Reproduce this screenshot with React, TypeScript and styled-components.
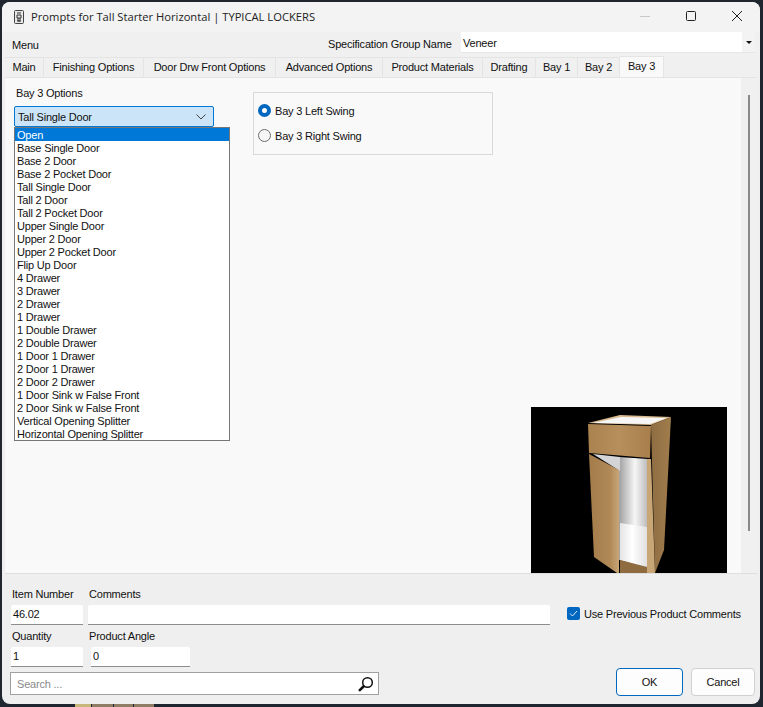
import React from "react";
import styled, { createGlobalStyle } from "styled-components";

const Global = createGlobalStyle`
  html, body { margin: 0; padding: 0; background: #1f2630; }
  body { font-family: "Liberation Sans", Arial, sans-serif; font-size: 11px; letter-spacing: -0.2px; color: #111; }
  #root { height: 707px; width: 763px; overflow: hidden; }
`;

const Desktop = styled.div`
  width: 763px; height: 707px; display: flex; flex-direction: column;
  padding: 2px 3px 0 2px; box-sizing: border-box; background: #1f2630;
`;
const Win = styled.div`
  height: 702px; flex: none; display: flex; flex-direction: column; background: #efefef;
  border-radius: 8px; overflow: hidden;
`;
const TitleBar = styled.div`
  height: 30px; flex: none; display: flex; align-items: center; background: #f3f3f3; padding-left: 12px;
`;
const TitleText = styled.div`
  margin-left: 7px; margin-bottom: 1px; font-family: "Open Sans", sans-serif; font-size: 11.2px; letter-spacing: 0; color: #222; flex: 1; white-space: nowrap;
`;
const WinButtons = styled.div`display: flex; align-items: center; color: #222;`;
const WinButton = styled.div`
  width: 46px; height: 30px; box-sizing: border-box; padding-bottom: 2px; display: flex; align-items: center; justify-content: center;
`;
const MenuRow = styled.div`
  height: 24px; flex: none; display: flex; align-items: center; background: #f0f0f0; padding: 0 5px 0 10px;
`;
const MenuLabel = styled.div`flex: none; width: 316px; padding-top: 2px;`;
const SpecLabel = styled.div`flex: none; width: 133px; white-space: nowrap;`;
const SpecCombo = styled.div`
  flex: 1; height: 21px; margin-top: -3px; background: #fff; display: flex; align-items: flex-start; justify-content: space-between;
  padding-left: 2px; line-height: 22px; border-bottom: 1px solid #e6e6e6; box-sizing: border-box;
`;
const SpecArrow = styled.div`
  width: 13px; height: 20px; background: #f3f3f3; display: flex; align-items: center; justify-content: center;
  &::before { content: ""; border: 3px solid transparent; border-top: 3px solid #111; border-bottom: 0; }
`;
const TabRow = styled.div`
  height: 21px; flex: none; display: flex; align-items: flex-end; padding-left: 3px; background: #f0f0f0;
`;
const Tab = styled.div<{ $w: number; $active?: boolean }>`
  width: ${(p) => p.$w}px; height: ${(p) => (p.$active ? 21 : 20)}px; box-sizing: border-box; flex: none;
  display: flex; align-items: center; justify-content: center; white-space: nowrap;
  background: ${(p) => (p.$active ? "#f9f9f9" : "#f0f0f0")};
  border: 1px solid #e4e4e4; border-bottom: 0; border-left: 0;
  padding-bottom: ${(p) => (p.$active ? 3 : 1)}px;
`;
const Panel = styled.div`
  height: 497px; flex: none; display: flex; margin: 0 3px 0 3px; background: #f9f9f9;
  border-top: 1px solid #e4e4e4; border-bottom: 1px solid #dedede; box-sizing: border-box;
`;
const Content = styled.div`
  flex: 1; display: flex; flex-direction: column; justify-content: space-between; padding-left: 9px; min-width: 0;
`;
const TopArea = styled.div`display: flex; padding-top: 8px; gap: 39px;`;
const OptionColumn = styled.div`position: relative; width: 200px; flex: none;`;
const OptionLabel = styled.div`margin-left: 2px; height: 20px; line-height: 15px;`;
const SelectBox = styled.div`
  height: 21px; box-sizing: border-box; background: #cce4f7; border: 1px solid #0078d4; border-radius: 2px;
  display: flex; align-items: center; justify-content: space-between; padding: 0 7px 0 3px;
`;
const DropList = styled.div`
  position: absolute; left: 0; top: 41px; width: 216px; box-sizing: border-box; background: #fff;
  border: 1px solid #767676; z-index: 2;
`;
const DropItem = styled.div<{ $sel?: boolean }>`
  height: 13px; line-height: 15px; padding-left: 2px; white-space: nowrap;
  background: ${(p) => (p.$sel ? "#0078d7" : "#fff")}; color: ${(p) => (p.$sel ? "#fff" : "#111")};
`;
const SwingBox = styled.div`
  width: 240px; height: 63px; margin-top: 6px; box-sizing: border-box; border: 1px solid #d9d9d9; flex: none;
  display: flex; flex-direction: column; padding: 11px 0 0 4px; gap: 12px;
`;
const RadioRow = styled.div`display: flex; align-items: center; gap: 4px; height: 13px;`;
const Radio = styled.div<{ $on?: boolean }>`
  width: 13px; height: 13px; box-sizing: border-box; border-radius: 50%;
  background: ${(p) => (p.$on ? "#fff" : "#f6f6f6")};
  border: ${(p) => (p.$on ? "4px solid #0067c0" : "1px solid #6c6c6c")};
`;
const PreviewRow = styled.div`display: flex; justify-content: flex-end; padding-right: 14px;`;
const Preview = styled.svg`display: block; width: 196px; height: 166px;`;
const ScrollTrack = styled.div`
  width: 16px; flex: none; background: #f0f0f0; padding-top: 17px; display: flex; justify-content: center; box-sizing: border-box;
`;
const ScrollThumb = styled.div`width: 2px; height: 436px; background: #8a8a8a; margin-right: 1px;`;
const Bottom = styled.div`
  flex: 1; display: flex; flex-direction: column; padding: 13px 5px 0 9px; position: relative; min-height: 0;
`;
const FieldRow = styled.div<{ $mt?: number }>`display: flex; align-items: flex-start; margin-top: ${(p) => p.$mt ?? 0}px;`;
const FieldStack = styled.div<{ $w: number; $ml?: number }>`
  width: ${(p) => p.$w}px; margin-left: ${(p) => p.$ml ?? 0}px; flex: none; display: flex; flex-direction: column;
`;
const FieldLabel = styled.div<{ $ml?: number }>`
  height: 18px; line-height: 14px; margin-left: ${(p) => p.$ml ?? 1}px; white-space: nowrap;
`;
const Input = styled.div`
  height: 19px; line-height: 19px; background: #fff; border-bottom: 1px solid #8d8d8d; box-sizing: content-box;
  padding-left: 2px; border-radius: 2px 2px 0 0;
`;
const CheckWrap = styled.div`
  margin-left: 17px; margin-top: 20px; display: flex; align-items: center; gap: 4px; white-space: nowrap;
`;
const Check = styled.div`
  width: 13px; height: 13px; border-radius: 2px; background: #0067c0; display: flex; align-items: center; justify-content: center;
`;
const SearchBar = styled.div`
  width: 369px; height: 23px; box-sizing: border-box; margin-top: 5px; margin-left: -1px; background: #fff; border: 1px solid #a0a0a0;
  display: flex; align-items: center; justify-content: space-between; padding: 0 4px 0 6px; color: #8a8a8a;
`;
const Buttons = styled.div`
  position: absolute; right: 5px; bottom: 8px; display: flex; gap: 8px;
`;
const DlgButton = styled.div<{ $w: number; $primary?: boolean }>`
  width: ${(p) => p.$w}px; height: 28px; box-sizing: border-box; background: #fdfdfd; border-radius: 4px;
  border: ${(p) => (p.$primary ? "1px solid #0067c0" : "1px solid #d0d0d0")};
  display: flex; align-items: center; justify-content: center;
`;
const Strips = styled.div`display: flex; height: 3px; margin-left: 73px; gap: 1px;`;
const Strip = styled.div<{ $w: number; $c: string }>`width: ${(p) => p.$w}px; background: ${(p) => p.$c};`;

const tabs: [string, number][] = [
  ["Main", 39], ["Finishing Options", 100], ["Door Drw Front Options", 132], ["Advanced Options", 107],
  ["Product Materials", 100], ["Drafting", 53], ["Bay 1", 42], ["Bay 2", 42],
];
const items = [
  "Open", "Base Single Door", "Base 2 Door", "Base 2 Pocket Door", "Tall Single Door", "Tall 2 Door", "Tall 2 Pocket Door",
  "Upper Single Door", "Upper 2 Door", "Upper 2 Pocket Door", "Flip Up Door", "4 Drawer", "3 Drawer", "2 Drawer", "1 Drawer",
  "1 Double Drawer", "2 Double Drawer", "1 Door 1 Drawer", "2 Door 1 Drawer", "2 Door 2 Drawer", "1 Door Sink w False Front",
  "2 Door Sink w False Front", "Vertical Opening Splitter", "Horizontal Opening Splitter",
];

const CabinetPreview = () => (
  <Preview viewBox="0 0 196 166">
    <defs>
      <linearGradient id="wood" x1="0" x2="1" y1="0" y2="0">
        <stop offset="0" stopColor="#a9824f" /><stop offset="0.5" stopColor="#b68f5c" /><stop offset="1" stopColor="#a87f4c" />
      </linearGradient>
      <linearGradient id="door" x1="0" x2="1" y1="0" y2="0">
        <stop offset="0" stopColor="#a47c4a" /><stop offset="0.7" stopColor="#b08958" /><stop offset="1" stopColor="#c9a677" />
      </linearGradient>
      <linearGradient id="side" x1="0" x2="1" y1="0" y2="0">
        <stop offset="0" stopColor="#8f6d42" /><stop offset="1" stopColor="#a17c4d" />
      </linearGradient>
      <linearGradient id="back" gradientUnits="userSpaceOnUse" x1="88" x2="117" y1="0" y2="0">
        <stop offset="0" stopColor="#a0a0a0" /><stop offset="0.55" stopColor="#f6f6f6" /><stop offset="1" stopColor="#b8b8b8" />
      </linearGradient>
      <linearGradient id="floor" x1="0" x2="1" y1="0" y2="0">
        <stop offset="0" stopColor="#e4e4e4" /><stop offset="0.45" stopColor="#ffffff" /><stop offset="1" stopColor="#e0e0e0" />
      </linearGradient>
      <filter id="soft"><feGaussianBlur stdDeviation="0.5" /></filter>
    </defs>
    <rect width="196" height="166" fill="#000" />
    <g filter="url(#soft)">
      <polygon points="57,16 89,8 140,10 120,18" fill="#d8bb90" />
      <polygon points="62,16 90,10 136,11 119,17" fill="#f6f6f6" />
      <polygon points="120,18 140,10 133,143 124,166" fill="url(#side)" />
      <polygon points="57,17 120,19 119,51 58,46" fill="url(#wood)" />
      <polygon points="88,50 117,52 117,161 88,153" fill="url(#back)" />
      <polygon points="62,47 89,50 89,64" fill="#d4d4d6" />
      <polygon points="89,116 116,120 116,160 89,153" fill="url(#floor)" />
      <polygon points="89,153 116,160 116,166 89,166" fill="#8f6c3f" />
      <polygon points="116,52 120,52 124,166 116,166" fill="#c9a676" />
      <polygon points="58,47 88,63 88,166 86,166 63,150" fill="url(#door)" />
    </g>
  </Preview>
);

export default function App() {
  return (
    <Desktop>
      <Global />
      <Win>
        <TitleBar>
          <svg width="10" height="14" viewBox="0 0 10 14" fill="none">
            <rect x="0.5" y="0.5" width="9" height="13" rx="1" fill="#e8e8e8" stroke="#444" />
            <path d="M3 3h4M3 5h4v3H3zM4 8v3h2V8M3 11h4" stroke="#333" strokeWidth="1" />
          </svg>
          <TitleText>Prompts for Tall Starter Horizontal | TYPICAL LOCKERS</TitleText>
          <WinButtons>
            <WinButton><svg width="10" height="10" viewBox="0 0 10 10"><path d="M0 5.500h10" stroke="#c8c8c8" /></svg></WinButton>
            <WinButton><svg width="10" height="10" viewBox="0 0 10 10"><rect x="0.5" y="0.5" width="9" height="9" rx="1" fill="none" stroke="#222" /></svg></WinButton>
            <WinButton><svg width="10" height="10" viewBox="0 0 10 10"><path d="M0 0l10 10M10 0L0 10" stroke="#222" /></svg></WinButton>
          </WinButtons>
        </TitleBar>
        <MenuRow>
          <MenuLabel>Menu</MenuLabel>
          <SpecLabel>Specification Group Name</SpecLabel>
          <SpecCombo>Veneer<SpecArrow /></SpecCombo>
        </MenuRow>
        <TabRow>
          {tabs.map(([t, w]) => <Tab key={t} $w={w}>{t}</Tab>)}
          <Tab $w={44} $active>Bay 3</Tab>
        </TabRow>
        <Panel>
          <Content>
            <TopArea>
              <OptionColumn>
                <OptionLabel>Bay 3 Options</OptionLabel>
                <SelectBox>
                  Tall Single Door
                  <svg width="10" height="6" viewBox="0 0 10 6"><path d="M0.500 0.500L5 5l4.500-4.500" fill="none" stroke="#444" /></svg>
                </SelectBox>
                <DropList>
                  {items.map((it, i) => <DropItem key={it} $sel={i === 0}>{it}</DropItem>)}
                </DropList>
              </OptionColumn>
              <SwingBox>
                <RadioRow><Radio $on />Bay 3 Left Swing</RadioRow>
                <RadioRow><Radio />Bay 3 Right Swing</RadioRow>
              </SwingBox>
            </TopArea>
            <PreviewRow><CabinetPreview /></PreviewRow>
          </Content>
          <ScrollTrack><ScrollThumb /></ScrollTrack>
        </Panel>
        <Bottom>
          <FieldRow>
            <FieldStack $w={72}><FieldLabel>Item Number</FieldLabel><Input>46.02</Input></FieldStack>
            <FieldStack $w={462} $ml={5}><FieldLabel>Comments</FieldLabel><Input /></FieldStack>
            <CheckWrap>
              <Check><svg width="9" height="7" viewBox="0 0 9 7"><path d="M1 3.500L3.500 6 8 1" fill="none" stroke="#dfeaf5" strokeWidth="1" /></svg></Check>
              Use Previous Product Comments
            </CheckWrap>
          </FieldRow>
          <FieldRow $mt={4}>
            <FieldStack $w={72}><FieldLabel>Quantity</FieldLabel><Input>1</Input></FieldStack>
            <FieldStack $w={99} $ml={8}><FieldLabel $ml={-2}>Product Angle</FieldLabel><Input>0</Input></FieldStack>
          </FieldRow>
          <SearchBar>
            Search ...
            <svg width="16" height="16" viewBox="0 0 16 16" fill="none">
              <circle cx="9.500" cy="6.500" r="4.800" stroke="#111" strokeWidth="1.500" />
              <path d="M5.500 10.500L1.800 14.200" stroke="#111" strokeWidth="2.600" strokeLinecap="round" />
            </svg>
          </SearchBar>
          <Buttons>
            <DlgButton $w={67} $primary>OK</DlgButton>
            <DlgButton $w={64}>Cancel</DlgButton>
          </Buttons>
        </Bottom>
      </Win>
      <Strips>
        <Strip $w={16} $c="#c8b77a" /><Strip $w={21} $c="#8f7d66" /><Strip $w={19} $c="#8f7d66" /><Strip $w={20} $c="#8f7d66" />
      </Strips>
    </Desktop>
  );
}
